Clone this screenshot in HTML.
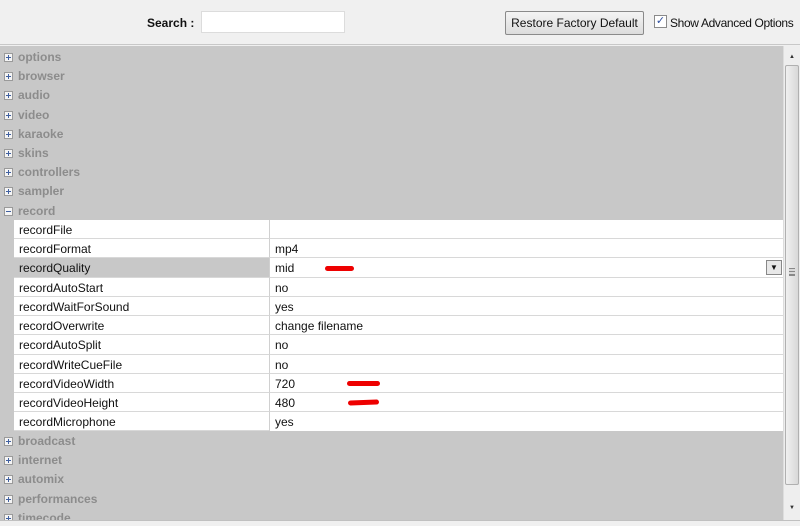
<!DOCTYPE html>
<html><head><style>
*{margin:0;padding:0;box-sizing:border-box}
body{width:800px;height:526px;overflow:hidden;background:#f0f0f0;font-family:"Liberation Sans",Arial,sans-serif;font-size:12px;position:relative}
.top{position:absolute;left:0;top:0;width:800px;height:45px;background:#f0f0f0;border-bottom:1px solid #c8c8c8}
.panel{position:absolute;left:0;top:46px;width:783px;height:474px;background:#c8c8c8;overflow:hidden}
.r{position:absolute;left:0;width:783px;height:20px;line-height:20px}
.cat{color:#8c8c8c;font-weight:bold;padding-left:18px}
.box{position:absolute;left:4px;top:6px;width:9px;height:9px;border:1px solid #9a9a9a;background:#f4f4f4}
.box:before{content:"";position:absolute;left:1px;top:3px;width:5px;height:1px;background:#4060a0}
.box.p:after{content:"";position:absolute;left:3px;top:1px;width:1px;height:5px;background:#4060a0}
.k{position:absolute;left:14px;width:255px;top:0;bottom:0;background:#fff;border-bottom:1px solid #d8d8d8;padding-left:5px;color:#111}
.v{position:absolute;left:269px;width:514px;top:0;bottom:0;background:#fff;border-bottom:1px solid #d8d8d8;border-left:1px solid #d0d0d0;padding-left:5px;color:#111}
.sel .k{background:#c8c8c8}
.red{position:absolute;height:5px;background:#e00;border-radius:3px}
</style></head><body>
<div class="top">
<span style="position:absolute;left:147px;top:16px;font-weight:bold;color:#111">Search :</span>
<div style="position:absolute;left:201px;top:11px;width:144px;height:22px;background:#fff;border:1px solid #dcdcdc"></div>
<div style="position:absolute;left:505px;top:11px;width:139px;height:24px;border:1px solid #8a8a8a;border-radius:2px;background:linear-gradient(#f4f4f4,#dcdcdc);text-align:center;line-height:22px;color:#111;white-space:nowrap">Restore Factory Default</div>
<div style="position:absolute;left:654px;top:15px;width:13px;height:13px;border:1px solid #8a8a8a;background:#fff;color:#3050a0;font-size:11px;line-height:11px;text-align:center">✓</div>
<span style="position:absolute;left:670px;top:16px;color:#111;white-space:nowrap;letter-spacing:-0.35px">Show Advanced Options</span>
</div>
<div class="panel">
<div class="r cat" style="top:1px"><i class="box p"></i>options</div>
<div class="r cat" style="top:20px"><i class="box p"></i>browser</div>
<div class="r cat" style="top:39px"><i class="box p"></i>audio</div>
<div class="r cat" style="top:59px"><i class="box p"></i>video</div>
<div class="r cat" style="top:78px"><i class="box p"></i>karaoke</div>
<div class="r cat" style="top:97px"><i class="box p"></i>skins</div>
<div class="r cat" style="top:116px"><i class="box p"></i>controllers</div>
<div class="r cat" style="top:135px"><i class="box p"></i>sampler</div>
<div class="r cat" style="top:155px"><i class="box"></i>record</div>
<div class="r" style="top:174px;height:19px"><div class="k">recordFile</div><div class="v"></div></div>
<div class="r" style="top:193px;height:19px"><div class="k">recordFormat</div><div class="v">mp4</div></div>
<div class="r sel" style="top:212px;height:20px"><div class="k">recordQuality</div><div class="v">mid<div style="position:absolute;right:1px;top:2px;width:16px;height:15px;border:1px solid #888;background:#e8e8e8;font-size:8px;line-height:13px;text-align:center">▼</div></div></div>
<div class="r" style="top:232px;height:19px"><div class="k">recordAutoStart</div><div class="v">no</div></div>
<div class="r" style="top:251px;height:19px"><div class="k">recordWaitForSound</div><div class="v">yes</div></div>
<div class="r" style="top:270px;height:19px"><div class="k">recordOverwrite</div><div class="v">change filename</div></div>
<div class="r" style="top:289px;height:20px"><div class="k">recordAutoSplit</div><div class="v">no</div></div>
<div class="r" style="top:309px;height:19px"><div class="k">recordWriteCueFile</div><div class="v">no</div></div>
<div class="r" style="top:328px;height:19px"><div class="k">recordVideoWidth</div><div class="v">720</div></div>
<div class="r" style="top:347px;height:19px"><div class="k">recordVideoHeight</div><div class="v">480</div></div>
<div class="r" style="top:366px;height:19px"><div class="k">recordMicrophone</div><div class="v" style="border-bottom:none">yes</div></div>
<div class="r cat" style="top:385px"><i class="box p"></i>broadcast</div>
<div class="r cat" style="top:404px"><i class="box p"></i>internet</div>
<div class="r cat" style="top:423px"><i class="box p"></i>automix</div>
<div class="r cat" style="top:443px"><i class="box p"></i>performances</div>
<div class="r cat" style="top:462px"><i class="box p"></i>timecode</div>
<div class="red" style="left:325px;top:220px;width:29px"></div>
<div class="red" style="left:347px;top:335px;width:33px"></div>
<div class="red" style="left:348px;top:354px;width:31px;transform:rotate(-2deg)"></div>
</div>
<div style="position:absolute;left:783px;top:46px;width:17px;height:474px;background:#eeeeee;border-left:1px solid #ddd">
<div style="position:absolute;left:5px;top:8px;font-size:6px;color:#333">▲</div>
<div style="position:absolute;left:1px;top:19px;width:14px;height:420px;border:1px solid #b0b0b0;border-radius:2px;background:linear-gradient(90deg,#f0f0f0,#d8d8d8)"></div>
<div style="position:absolute;left:5px;top:222px;width:6px;height:8px;border-top:1px solid #888;border-bottom:1px solid #888;background:linear-gradient(#d8d8d8 0 2px,#888 2px 3px,#d8d8d8 3px 5px,#888 5px 6px,#d8d8d8 6px)"></div>
<div style="position:absolute;left:5px;top:459px;font-size:6px;color:#333">▼</div>
</div>
<div style="position:absolute;left:0;top:520px;width:800px;height:1px;background:#c0c0c0"></div>
</body></html>
